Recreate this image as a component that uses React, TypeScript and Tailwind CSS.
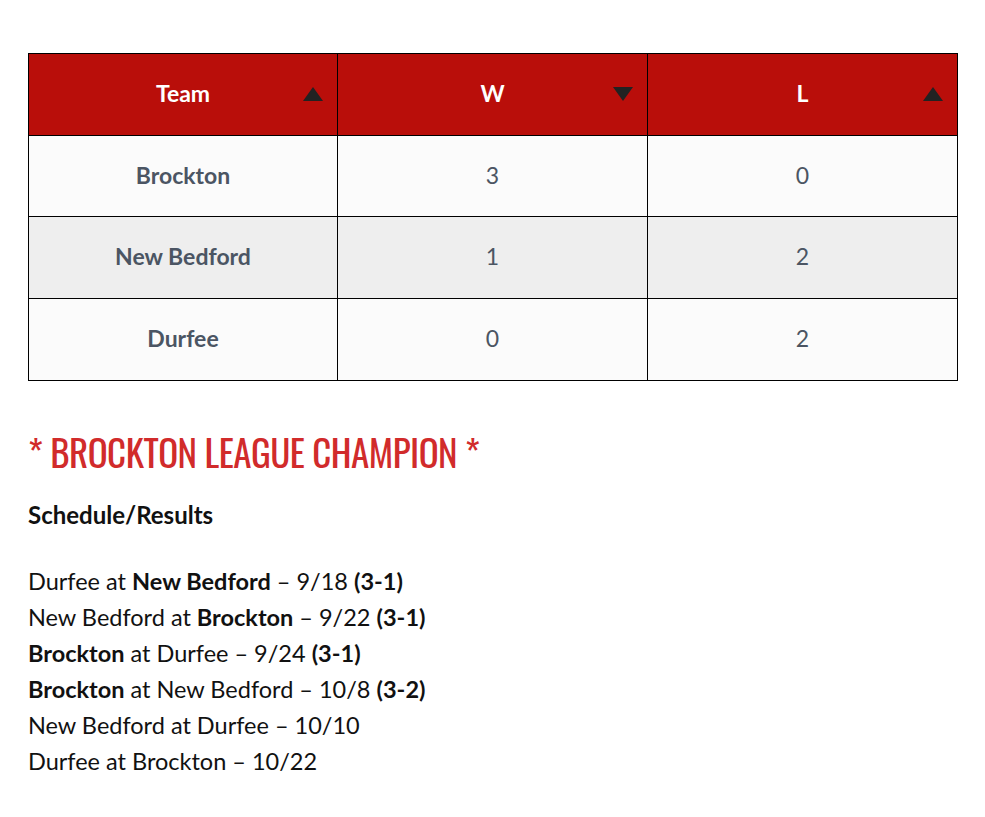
import React from 'react';

const rows = [
  { team: 'Brockton', w: 3, l: 0 },
  { team: 'New Bedford', w: 1, l: 2 },
  { team: 'Durfee', w: 0, l: 2 },
];

const games: { parts: [string, boolean][] }[] = [
  { parts: [['Durfee at ', false], ['New Bedford', true], [' – 9/18 ', false], ['(3-1)', true]] },
  { parts: [['New Bedford at ', false], ['Brockton', true], [' – 9/22 ', false], ['(3-1)', true]] },
  { parts: [['Brockton', true], [' at Durfee – 9/24 ', false], ['(3-1)', true]] },
  { parts: [['Brockton', true], [' at New Bedford – 10/8 ', false], ['(3-2)', true]] },
  { parts: [['New Bedford at Durfee – 10/10', false]] },
  { parts: [['Durfee at Brockton – 10/22', false]] },
];

const Arrow = ({ up }: { up: boolean }) => (
  <svg width="20" height="16" viewBox="0 0 20 16" className="absolute right-[14px] top-1/2 -translate-y-[9px]">
    {up ? <polygon points="10,1 20,15 0,15" fill="#222" /> : <polygon points="0,1 20,1 10,15" fill="#222" />}
  </svg>
);

const HeadCell = ({ label, up }: { label: string; up: boolean }) => (
  <th className="relative h-[82px] border border-black bg-[#b90e0a] pb-[3px] text-center text-[23px] font-bold text-white">
    {label}
    <Arrow up={up} />
  </th>
);

export default function App() {
  return (
    <div className="min-h-screen bg-white pt-[53px] px-[28px] font-['Lato','Liberation_Sans',sans-serif]">
      <table className="w-[929px] table-fixed border-collapse border border-black">
        <colgroup>
          <col className="w-[309px]" />
          <col className="w-[310px]" />
          <col className="w-[310px]" />
        </colgroup>
        <thead>
          <tr>
            <HeadCell label="Team" up />
            <HeadCell label="W" up={false} />
            <HeadCell label="L" up />
          </tr>
        </thead>
        <tbody>
          {rows.map((r, i) => (
            <tr key={r.team} className={i % 2 === 1 ? 'bg-[#eeeeee]' : 'bg-[#fbfbfb]'}>
              <td className={`${i === 0 ? 'h-[81px] pb-[2px]' : 'h-[82px] pb-[3px]'} border border-black text-center text-[23px] font-bold text-[#4b5563]`}>{r.team}</td>
              <td className={`${i === 0 ? 'pb-[2px]' : 'pb-[3px]'} border border-black text-center text-[23px] text-[#4b5563]`}>{r.w}</td>
              <td className={`${i === 0 ? 'pb-[2px]' : 'pb-[3px]'} border border-black text-center text-[23px] text-[#4b5563]`}>{r.l}</td>
            </tr>
          ))}
        </tbody>
      </table>

      <h2 className="mt-[47px] font-['Oswald','Liberation_Sans_Narrow','DejaVu_Sans_Condensed',sans-serif] text-[37px] leading-[48px] text-[#d12b2b] tracking-[-0.5px]">
        * BROCKTON LEAGUE CHAMPION *
      </h2>

      <p className="mt-[21px] text-[24px] font-bold leading-[36px] text-[#111]">Schedule/Results</p>

      <div className="mt-[30px] text-[23.5px] leading-[36px] text-[#111]">
        {games.map((g, i) => (
          <div key={i}>
            {g.parts.map(([t, b], j) => (b ? <strong key={j}>{t}</strong> : <span key={j}>{t}</span>))}
          </div>
        ))}
      </div>
    </div>
  );
}
